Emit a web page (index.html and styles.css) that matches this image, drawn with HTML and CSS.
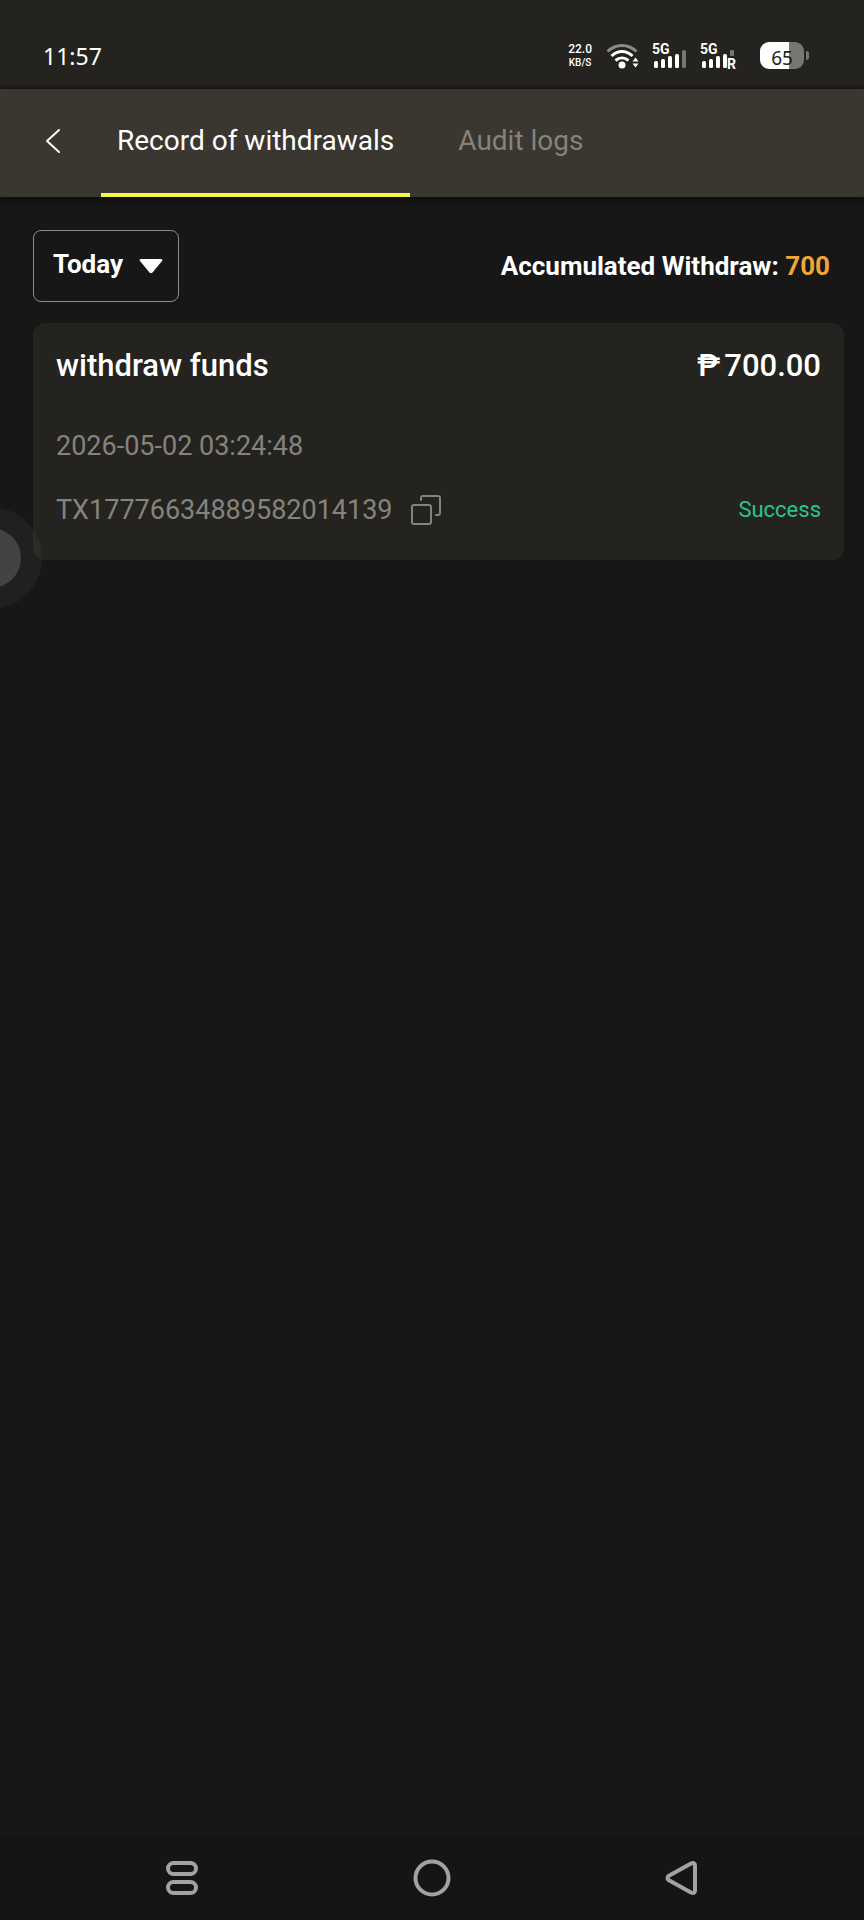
FILE: index.html
```html
<!DOCTYPE html>
<html lang="en">
<head>
  <meta charset="UTF-8">
  <meta name="viewport" content="width=device-width, initial-scale=1">
  <title>Record of withdrawals</title>
  <link rel="stylesheet" href="styles.css">
</head>
<body>
  <div class="statusbar">
    <span class="clock">11:57</span>
    <div class="status-icons">
      <div class="speed"><span class="speed-num">22.0</span><span class="speed-unit">KB/S</span></div>
      <svg class="wifi" width="34" height="28" viewBox="0 0 34 28" fill="none" stroke="#fff" stroke-width="3">
        <path d="M1.5 9.5C10 1.500 22 1.500 30.500 9.500" stroke="#8c8b88"/>
        <path d="M5.500 14C12 8 20 8 26.500 14"/>
        <path d="M9.500 18.500C13.500 15 18.500 15 22.500 18.500"/>
        <circle cx="16" cy="23" r="3.500" fill="#fff" stroke="none"/>
        <path d="M26.500 19.500l3-4 3 4zM26.500 21.500l3 4 3-4z" fill="#fff" stroke="none"/>
      </svg>
      <div class="signal">
        <span class="net">5G</span>
        <svg width="34" height="18" viewBox="0 0 34 18" fill="#fff">
          <rect x="2" y="11" width="4" height="7" rx="1.500"/>
          <rect x="9" y="9" width="4" height="9" rx="1.500"/>
          <rect x="16" y="6" width="4" height="12" rx="1.500"/>
          <rect x="23" y="4" width="4" height="14" rx="1.500"/>
          <rect x="30" y="0" width="4" height="18" rx="1.500" fill="#777673"/>
        </svg>
      </div>
      <div class="signal">
        <span class="net">5G</span>
        <svg width="34" height="18" viewBox="0 0 34 18" fill="#fff">
          <rect x="2" y="11" width="4" height="7" rx="1.500"/>
          <rect x="9" y="9" width="4" height="9" rx="1.500"/>
          <rect x="16" y="6" width="4" height="12" rx="1.500"/>
          <rect x="23" y="4" width="4" height="14" rx="1.500"/>
          <rect x="30" y="0" width="4" height="6" rx="1" fill="#777673"/>
        </svg>
        <span class="roam">R</span>
      </div>
      <div class="battery"><span class="level">65</span></div>
    </div>
  </div>

  <header class="topbar">
    <button class="back" aria-label="Back">
      <svg width="16" height="26" viewBox="0 0 16 26" fill="none" stroke="#fff" stroke-width="2" stroke-linecap="round" stroke-linejoin="round"><path d="M14 2L2 13l12 11"/></svg>
    </button>
    <nav class="tabs">
      <a href="#withdrawals" class="tab active">Record of withdrawals</a>
      <a href="#audit" class="tab">Audit logs</a>
    </nav>
  </header>

  <main>
    <div class="filters">
      <div class="period">
        <select id="period" aria-label="Period">
          <option>Today</option>
        </select>
        <svg class="caret" width="24" height="16" viewBox="0 0 24 16" fill="#fff"><path d="M2 1h20c1.500 0 1.800 1 1 2l-9.500 11.500c-1 1-2 1-3 0L1 3C.2 2 .5 1 2 1z"/></svg>
      </div>
      <div class="total">Accumulated Withdraw: <span class="total-num">700</span></div>
    </div>

    <section class="record">
      <div class="row title-row">
        <span>withdraw funds</span>
        <span><span class="peso">₱</span>700.00</span>
      </div>
      <div class="row date">2026-05-02 03:24:48</div>
      <div class="row">
        <div class="txid">
          <span>TX17776634889582014139</span>
          <button class="copy" aria-label="Copy">
            <svg width="30" height="30" viewBox="0 0 30 30" fill="none" stroke="#85837d" stroke-width="2" stroke-linecap="round">
              <rect x="1" y="10" width="19" height="19" rx="2"/>
              <path d="M10 5V3a2 2 0 0 1 2-2h15a2 2 0 0 1 2 2v15a2 2 0 0 1-2 2h-2"/>
            </svg>
          </button>
        </div>
        <span class="success">Success</span>
      </div>
    </section>
  </main>

  <div class="assist"></div>

  <div class="navbar">
    <button aria-label="Recent apps">
      <svg width="38" height="38" viewBox="0 0 38 38" fill="none" stroke="#a3a2a3" stroke-width="4"><rect x="5" y="4" width="28" height="11" rx="5.500"/><rect x="5" y="23" width="28" height="11" rx="5.500"/></svg>
    </button>
    <button aria-label="Home">
      <svg width="38" height="38" viewBox="0 0 38 38" fill="none" stroke="#a3a2a3" stroke-width="4"><circle cx="19" cy="19" r="16.500"/></svg>
    </button>
    <button aria-label="Back">
      <svg width="38" height="38" viewBox="0 0 38 38" fill="none" stroke="#a3a2a3" stroke-width="4" stroke-linejoin="round"><path d="M5.500 17L28 4.500q4-1.500 4 2v25q0 3.500-4 2L5.500 21q-2-2 0-4z"/></svg>
    </button>
  </div>
</body>
</html>
```
FILE: styles.css
```css
* { box-sizing: border-box; }
body {
  margin: 0; background: #171717; color: #fff;
  font-family: Roboto, sans-serif; font-size: 27px; line-height: 32px;
  min-height: 100vh; display: flex; flex-direction: column;
}
button { background: none; border: none; padding: 0; cursor: pointer; }
svg { display: block; }

.statusbar {
  height: 89px; padding: 25px 60px 0 43px; background: #24231f;
  border-bottom: 3px solid #1d1c19;
  display: flex; align-items: center; justify-content: space-between;
}
.clock { font-family: "Noto Sans", sans-serif; font-size: 23px; }
.status-icons { display: flex; align-items: center; }
.speed { display: flex; flex-direction: column; align-items: center; font-weight: 500; margin-right: 14px; }
.speed-num { font-size: 12px; line-height: 13px; }
.speed-unit { font-size: 10px; line-height: 13px; }
.wifi { margin-right: 12px; }
.signal { position: relative; width: 36px; height: 28px; margin-right: 12px; padding-top: 8px; }
.net { position: absolute; left: 0; top: 0; font-size: 14px; line-height: 14px; font-weight: 700; }
.roam { position: absolute; right: 0; bottom: 0; font-size: 14px; line-height: 12px; font-weight: 700; background: #24231f; }
.battery {
  position: relative; width: 44px; height: 27px; margin-left: 12px; border-radius: 9px;
  background: linear-gradient(to right, #fff 65%, #777673 65%);
  text-align: center; color: #24231f;
}
.battery::after {
  content: ""; position: absolute; left: 46px; top: 9px; width: 3px; height: 9px;
  background: #777673; border-radius: 0 3px 3px 0;
}
.level { font-family: "Noto Sans", sans-serif; font-size: 19px; line-height: 32px; display: block; }

.topbar { height: 108px; background: #3a3630; display: flex; box-shadow: 0 2px 8px #0008; }
.back { width: 101px; padding-left: 45px; padding-bottom: 4px; }
.tabs { display: flex; gap: 32px; }
.tab {
  padding: 36px 16px 0; border-bottom: 4px solid transparent;
  color: #85837a; text-decoration: none; font-size: 28px;
}
.tab.active { color: #fff; border-color: #f3f54b; }

main { flex: 1; padding: 33px 20px 0 33px; }
.filters { display: flex; align-items: center; justify-content: space-between; padding-right: 14px; margin-bottom: 21px; }
.period { display: grid; align-items: center; width: 146px; height: 72px; }
.period select {
  grid-area: 1 / 1; width: 100%; height: 100%; padding: 0 0 4px 19px;
  appearance: none; background: none; border: 1px solid #8c8b88; border-radius: 8px;
  color: #fff; font: 700 26px/32px Roboto, sans-serif;
}
.period option { background: #24231f; }
.caret { grid-area: 1 / 1; justify-self: end; margin-right: 16px; pointer-events: none; }
.total { font-size: 26px; font-weight: 700; }
.total-num { color: #f0a638; }

.record {
  background: #24231f; border-radius: 12px; padding: 27px 23px 34px;
  display: flex; flex-direction: column; gap: 32px;
}
.row { display: flex; align-items: center; justify-content: space-between; color: #85837d; }
.title-row { color: #fff; font-size: 31px; font-weight: 500; margin-bottom: 16px; }
.peso { margin-right: 4px; }
.txid { display: flex; align-items: center; gap: 18px; }
.success { color: #2bc587; font-size: 22px; }

/* floating assistive button, half off the left edge */
.assist {
  position: fixed; left: -60px; top: 507px; width: 102px; height: 102px; padding: 21px;
  border-radius: 50%; background: #ffffff0a;
}
.assist::before { content: ""; display: block; height: 60px; border-radius: 50%; background: #434343; }

.navbar {
  height: 84px; background: #151516; padding: 0 57px;
  display: grid; grid-template-columns: repeat(3, 1fr); justify-items: center; align-items: center;
}
```
